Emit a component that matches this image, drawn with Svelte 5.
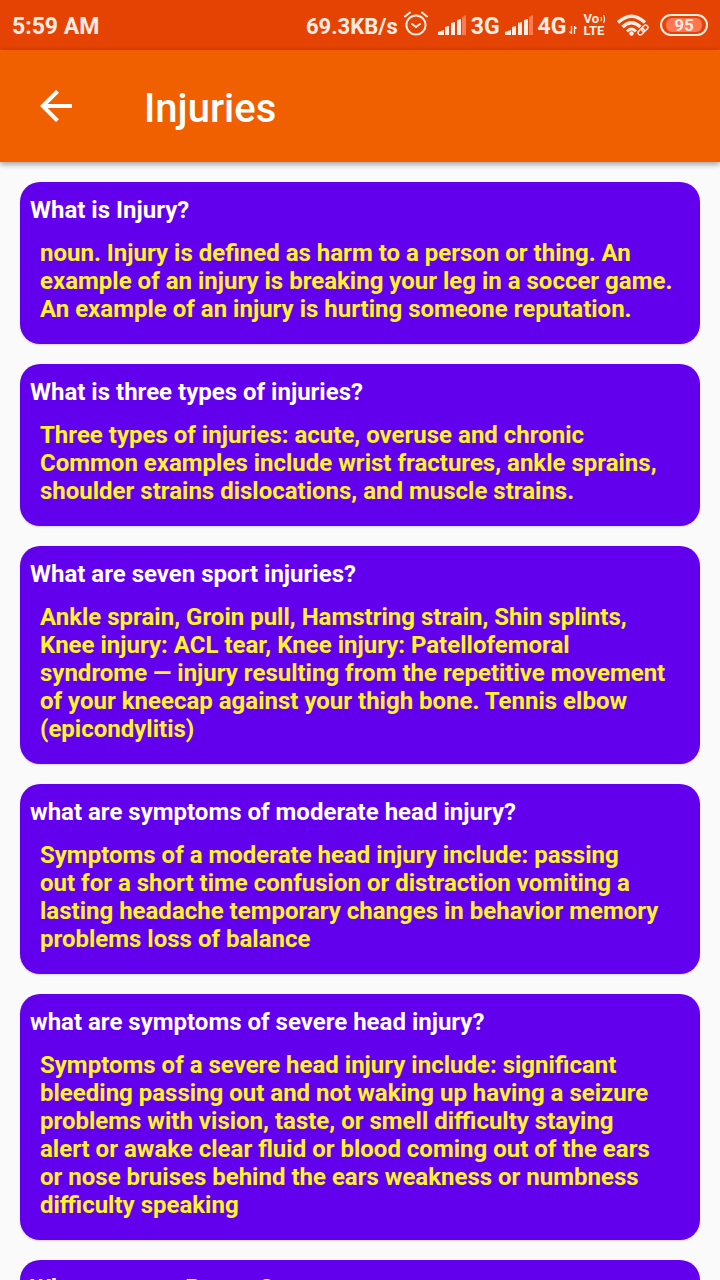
<script>
  const cards = [
    {
      title: 'What is Injury?',
      body: 'noun. Injury is defined as harm to a person or thing. An example of an injury is breaking your leg in a soccer game. An example of an injury is hurting someone reputation.'
    },
    {
      title: 'What is three types of injuries?',
      body: 'Three types of injuries: acute, overuse and chronic\nCommon examples include wrist fractures, ankle sprains, shoulder strains dislocations, and muscle strains.'
    },
    {
      title: 'What are seven sport injuries?',
      body: 'Ankle sprain, Groin pull, Hamstring strain, Shin splints, Knee injury: ACL tear, Knee injury: Patellofemoral syndrome — injury resulting from the repetitive movement of your kneecap against your thigh bone. Tennis elbow (epicondylitis)'
    },
    {
      title: 'what are symptoms of moderate head injury?',
      body: 'Symptoms of a moderate head injury include: passing\nout for a short time confusion or distraction vomiting a lasting headache temporary changes in behavior memory problems loss of balance'
    },
    {
      title: 'what are symptoms of severe head injury?',
      body: 'Symptoms of a severe head injury include: significant bleeding passing out and not waking up having a seizure problems with vision, taste, or smell difficulty staying\nalert or awake clear fluid or blood coming out of the ears\nor nose bruises behind the ears weakness or numbness difficulty speaking'
    },
    { title: 'What are your Bumps?', body: '' }
  ];
</script>

{#snippet signal()}
  <svg class="signal" width="28" height="20" viewBox="0 0 28 20" aria-hidden="true">
    <path d="M0 20v-3l6-2v5zM7 20v-8l4-1v9zM13 20V8l4-1v13zM19 20V5l4-1v16z" fill="currentColor" />
    <path d="M24 20V2l4-2v20z" fill="#ff7b51" />
  </svg>
{/snippet}

<div class="screen">
  <div class="status">
    <span class="time">5:59 AM</span>
    <div class="indicators">
      <span class="speed">69.3KB/s</span>
      <svg class="alarm" width="24" height="26" viewBox="0 0 24 26" fill="none" stroke="currentColor" stroke-width="2" stroke-linecap="round" aria-hidden="true">
        <circle cx="12" cy="14" r="9.6" />
        <path d="M8 13l4 3 4-3M1 5.500l5-4M23 5.500l-5-4" />
      </svg>
      {@render signal()}
      <span class="net">3G</span>
      {@render signal()}
      <span class="net">4G</span>
      <svg class="data" width="8" height="8" viewBox="0 0 8 8" fill="none" stroke="currentColor" stroke-width="1.300" aria-hidden="true">
        <path d="M2.500 0v7.500L.5 5.500M5.500 8V.5l2 2" />
      </svg>
      <div class="volte">
        <span class="vo">Vo<svg width="6" height="8" viewBox="0 0 6 8" fill="none" stroke="currentColor" stroke-width="1.200" aria-hidden="true"><path d="M1 2q1 2 0 4M3.500 0q2 4 0 8" /></svg></span>
        <span>LTE</span>
      </div>
      <svg class="wifi" width="33" height="22" viewBox="0 0 33 22" fill="none" stroke="currentColor" aria-hidden="true">
        <g stroke-width="3.400">
          <path d="M1 8.500Q14.500-4 28 8.500" />
          <path d="M5.500 13Q14.500 4.500 23.500 13" />
          <path d="M10 17.500Q14.500 12.500 19 17.500" stroke-width="2.800" />
        </g>
        <circle cx="14.500" cy="19.500" r="2.200" fill="currentColor" stroke="none" />
        <g transform="rotate(-45 26 16)">
          <rect x="18.500" y="12" width="15" height="8" rx="4" fill="#e54304" stroke="none" />
          <rect x="20" y="13.800" width="7" height="4.400" rx="2.200" stroke-width="1.500" />
          <rect x="25" y="13.800" width="7" height="4.400" rx="2.200" stroke-width="1.500" />
        </g>
      </svg>
      <div class="battery"><span>95</span></div>
    </div>
  </div>

  <header>
    <button aria-label="Back">
      <svg width="32" height="32" viewBox="0 0 32 32" fill="none" stroke="currentColor" stroke-width="4" aria-hidden="true">
        <path d="M17.500 1.300L2.800 16l14.700 14.700M2.800 16H32" />
      </svg>
    </button>
    <h1>Injuries</h1>
  </header>

  <main>
    {#each cards as card}
      <article>
        <h2>{card.title}</h2>
        <p>{card.body}</p>
      </article>
    {/each}
  </main>
</div>

<style>
  :global(body) {
    margin: 0;
    background: #fafafa;
  }
  .screen {
    height: 100vh;
    overflow: hidden;
    display: flex;
    flex-direction: column;
    font-family: Roboto, sans-serif;
  }
  .status {
    flex: none;
    height: 50px;
    box-sizing: border-box;
    padding: 2px 12px 0;
    display: flex;
    justify-content: space-between;
    align-items: center;
    background: #e54304;
    color: #ffece2;
    font-size: 23px;
    font-weight: 700;
  }
  .indicators {
    display: flex;
    align-items: center;
  }
  .speed {
    font-size: 22px;
  }
  .alarm {
    margin: 0 10px 4px 6px;
  }
  .signal {
    margin: 0 5px 2px 0;
  }
  .net {
    margin-right: 5px;
  }
  .data {
    margin: 8px 6px 0 -2px;
  }
  .volte {
    display: flex;
    flex-direction: column;
    font-size: 13px;
    line-height: 12px;
    font-weight: 700;
    margin: 0 11px 2px 0;
  }
  .vo {
    display: flex;
    align-items: center;
    gap: 1px;
  }
  .wifi {
    margin: 0 10px 2px 0;
  }
  .battery {
    width: 48px;
    height: 22px;
    box-sizing: border-box;
    border: 2px solid currentColor;
    border-radius: 11px;
    padding: 2px 4px;
    display: flex;
    margin-bottom: 2px;
  }
  .battery span {
    flex: 1;
    border-radius: 6px;
    background: #ff7650;
    font-size: 17px;
    line-height: 14px;
    text-align: center;
  }
  header {
    flex: none;
    height: 112px;
    display: flex;
    align-items: center;
    background: #f06000;
    color: #fff;
    box-shadow: 0 2px 6px rgba(0, 0, 0, 0.4);
    z-index: 1;
  }
  button {
    width: 112px;
    height: 112px;
    padding: 0;
    border: 0;
    background: none;
    color: inherit;
    display: grid;
    place-items: center;
  }
  h1 {
    margin: 6px 0 0 32px;
    font-size: 40px;
    line-height: 48px;
    font-weight: 500;
  }
  main {
    flex: 1;
    min-height: 0;
    overflow: hidden;
    padding: 20px;
    display: flex;
    flex-direction: column;
    gap: 20px;
  }
  article {
    flex: none;
    padding: 14px 10px 21px;
    border-radius: 20px;
    background: #6200ee;
    box-shadow: 0 1px 2px rgba(0, 0, 0, 0.15);
    font-size: 24px;
    line-height: 28px;
  }
  h2 {
    margin: 0;
    font-size: inherit;
    font-weight: 700;
    color: #fff;
  }
  p {
    margin: 15px 10px 0;
    font-weight: 700;
    color: #fff22a;
    white-space: pre-line;
  }
</style>
